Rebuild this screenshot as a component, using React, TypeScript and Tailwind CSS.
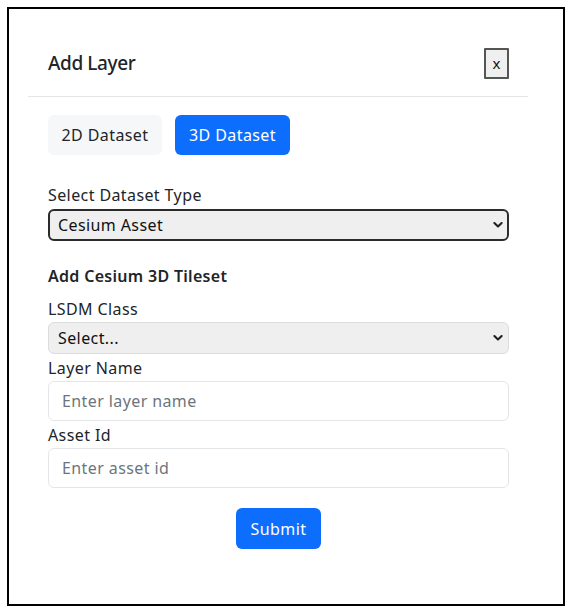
import React from "react";

function Chevron() {
  return (
    <svg
      className="pointer-events-none absolute right-[6px] top-1/2 -translate-y-1/2"
      width="10"
      height="7"
      viewBox="0 0 10 7"
      fill="none"
    >
      <path d="M1.4 1.5 L5 5 L8.6 1.5" stroke="#1f1f1f" strokeWidth="2.1" strokeLinecap="round" strokeLinejoin="round" />
    </svg>
  );
}

export default function App() {
  return (
    <div
      className="w-[572px] h-[615px] bg-white text-[#212529] pt-[7px] pl-[7px]"
      style={{ fontFamily: '"Noto Sans", "Open Sans", sans-serif' }}
    >
      <div className="w-[558px] h-[599px] border-[2.5px] border-black bg-white pl-[19px] pt-[1px]">
        <div className="w-[500px] rounded-t-[6px] bg-white">
          {/* Header */}
          <div className="flex items-start justify-between h-[87px] pl-[20px] pr-[19px] pt-[38px] border-b border-[#e3e5e8]">
            <h1 className="text-[19px] leading-[30px] font-medium tracking-[-0.4px]">Add Layer</h1>
            <button className="w-[25px] h-[31px] border-2 border-[#555] bg-[#efefef] text-[15px] leading-none flex items-center justify-center text-[#111] rounded-[1px]">
              x
            </button>
          </div>

          {/* Body */}
          <div className="px-[20px] pt-[18px]">
            <div className="flex gap-[13px]">
              <button className="h-[40px] w-[114px] rounded-[6px] bg-[#f6f7f8] text-[16px] tracking-[0.4px] text-[#212529]">
                2D Dataset
              </button>
              <button className="h-[40px] w-[115px] rounded-[6px] bg-[#0d6efd] text-[16px] tracking-[0.4px] text-white">
                3D Dataset
              </button>
            </div>

            <div className="mt-[28px] text-[16px] leading-[24px] tracking-[0.4px]">Select Dataset Type</div>
            <div className="relative mt-[2px] w-[461px]">
              <select
                className="appearance-none w-full h-[32px] border-2 border-[#2b2b2b] rounded-[6px] bg-[#efefef] pl-[8px] text-[16px] tracking-[0.4px] text-[#111] outline-none"
                defaultValue="cesium"
              >
                <option value="cesium">Cesium Asset</option>
              </select>
              <Chevron />
            </div>

            <div className="mt-[23px] text-[16px] leading-[24px] font-semibold tracking-[0.3px]">Add Cesium 3D Tileset</div>
            <div className="mt-[9px] text-[16px] leading-[24px] tracking-[0.4px]">LSDM Class</div>
            <div className="relative mt-[1px] w-[461px]">
              <select
                className="appearance-none w-full h-[32px] border border-[#dcdcdc] rounded-[6px] bg-[#efefef] pl-[9px] text-[16px] tracking-[0.4px] text-[#111] outline-none"
                defaultValue=""
              >
                <option value="">Select...</option>
              </select>
              <Chevron />
            </div>

            <div className="mt-[2px] text-[16px] leading-[24px] tracking-[0.4px]">Layer Name</div>
            <input
              className="mt-[1px] block w-[461px] h-[40px] border border-[#e3e5e8] rounded-[6px] bg-white pl-[13px] text-[16px] tracking-[0.4px] placeholder:text-[#6c757d] outline-none"
              placeholder="Enter layer name"
            />

            <div className="mt-[2px] text-[16px] leading-[24px] tracking-[0.4px]">Asset Id</div>
            <input
              className="mt-[1px] block w-[461px] h-[40px] border border-[#e3e5e8] rounded-[6px] bg-white pl-[13px] text-[16px] tracking-[0.4px] placeholder:text-[#6c757d] outline-none"
              placeholder="Enter asset id"
            />

            <div className="flex justify-center w-[461px] mt-[20px]">
              <button className="h-[41px] w-[85px] rounded-[6px] bg-[#0d6efd] text-white text-[16px] tracking-[0.4px]">
                Submit
              </button>
            </div>
          </div>
        </div>
      </div>
    </div>
  );
}
